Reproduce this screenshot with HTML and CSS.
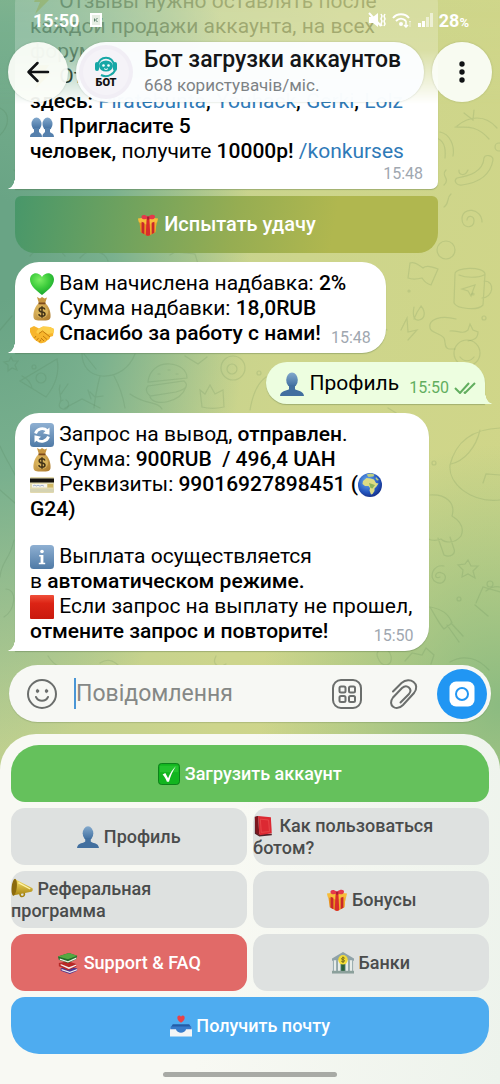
FILE: index.html
```html
<!DOCTYPE html>
<html lang="uk">
<head>
<meta charset="utf-8">
<meta name="viewport" content="width=device-width, initial-scale=1">
<title>Бот загрузки аккаунтов</title>
<link rel="stylesheet" href="styles.css">
</head>
<body>
<svg class="sprite" aria-hidden="true">
  <defs>
    <linearGradient id="blueSkin" x1="0" y1="0" x2="0" y2="1"><stop offset="0" stop-color="#83a9cd"/><stop offset="1" stop-color="#3b6a9c"/></linearGradient>
    <linearGradient id="tile" x1="0" y1="0" x2="0" y2="1"><stop offset="0" stop-color="#8fb0d2"/><stop offset="1" stop-color="#4f7aa6"/></linearGradient>
    <linearGradient id="redTile" x1="0" y1="0" x2="0" y2="1"><stop offset="0" stop-color="#f0503a"/><stop offset=".35" stop-color="#dc2415"/><stop offset="1" stop-color="#c9190d"/></linearGradient>
    <radialGradient id="heartFill" cx=".4" cy=".3" r=".8"><stop offset="0" stop-color="#7bee63"/><stop offset=".5" stop-color="#3bcb3b"/><stop offset="1" stop-color="#109a2c"/></radialGradient>
    <radialGradient id="sea" cx=".4" cy=".35" r=".65"><stop offset="0" stop-color="#6fb2ef"/><stop offset=".7" stop-color="#2457c0"/><stop offset="1" stop-color="#17348e"/></radialGradient>
    <linearGradient id="sack" x1="0" y1="0" x2="1" y2="1"><stop offset="0" stop-color="#e8c36b"/><stop offset="1" stop-color="#a9772a"/></linearGradient>
    <linearGradient id="goldHorn" x1="0" y1="0" x2="0" y2="1"><stop offset="0" stop-color="#f6e06a"/><stop offset="1" stop-color="#a9860f"/></linearGradient>
  </defs>
  <symbol id="bust" viewBox="0 0 24 24"><ellipse cx="12" cy="8" rx="5.800" ry="7.600" fill="url(#blueSkin)"/><path d="M9 13h6v4c1 2 8.500 1 9 7H0c.5-6 8-5 9-7z" fill="#426f9f"/></symbol>
  <symbol id="busts" viewBox="0 0 24 24"><ellipse cx="6.500" cy="9" rx="5" ry="6.500" fill="url(#blueSkin)"/><ellipse cx="17.500" cy="9" rx="5" ry="6.500" fill="url(#blueSkin)"/><path d="M4 13h5v4c1 1.300 3 1.500 3 5H0c0-4 3-3.500 4-5zM15 13h5v4c1 1.500 4 1 4 5H12.500c0-3.500 1.500-3.700 2.500-5z" fill="#5580ad"/></symbol>
  <symbol id="gift" viewBox="0 0 24 24"><path d="M2.500 8l9.500 3 9.500-3-1.500 12-8 4-8-4z" fill="#e8921e"/><path d="M12 10l9.500-2L20 20l-8 4z" fill="#f0ae2b"/><path d="M1 5l10-1.500L23 5l-1 4-10 3L2 9z" fill="#f7bd38"/><path d="M5 8.500l3 1V22l-3-1.500zM16 9.500l3-1V20.500L16 22z" fill="#c9282c"/><path d="M10.500 5h3l1 18.200-2.500.8-2.500-.8z" fill="#d92c2c"/><path d="M12 5C9 6 6 6.500 5 4c-1-3 3-4.500 7-1 4-3.500 8.500-2.500 7.500.8C18.500 6.500 15 6 12 5z" fill="#e5384a"/><path d="M11 2.800h2.400v3.400H11z" fill="#a91d30"/></symbol>
  <symbol id="heart" viewBox="0 0 24 24"><path d="M12 23C7 19 0 14 0 7.500 0 1 8-1.500 12 5c4-6.500 12-4 12 2.500C24 14 17 19 12 23z" fill="url(#heartFill)"/></symbol>
  <symbol id="moneybag" viewBox="0 0 24 24"><path d="M7 0l3 1.500L12 0l2.500 1.500L17 .5l-2 6H9z" fill="#c79640"/><path d="M9 6h6c4 3 6 9 5.500 14-.2 3-2.500 3.500-8.500 3.500S3.700 23 3.500 20C3 15 5 9 9 6z" fill="url(#sack)"/><path d="M8.500 5.500h7v1.800h-7z" fill="#7d4b1c"/><circle cx="12" cy="15" r="6" fill="#d8b35b"/><path d="M15 12.500c-.5-1.300-1.600-1.700-3-1.700-3.700 0-3.800 3.700 0 4.100 4 .4 3.900 4.300 0 4.300-1.600 0-2.900-.7-3.200-2.100M12 9.300v11.400" fill="none" stroke="#403117" stroke-width="1.500"/></symbol>
  <symbol id="handshake" viewBox="0 0 24 24"><path d="M0 6l4-2 5 2.500 4-2L20 5l4 2-1 7-3 1c0 3-3 3-3.500 4-1 2-3 1.500-4 2-2 1-4-.5-5-1.500C4 18 1.500 14 0 10z" fill="#f7b52c"/><path d="M4 4l5 2.500 4-2L20 5l4 2-.5 4-6 1-5-3-4 2.500C6 12 5.500 9 9 6.500" fill="#fdcf4b"/><path d="M9 11.500l3.500-2.500 7.500 6M6 14l-1.500 2M8.500 16l-2 2.500M11 17.500L9.500 20M13 14l4 3.500M11 16l3 3" fill="none" stroke="#c57c0d" stroke-width="1"/></symbol>
  <symbol id="refresh" viewBox="0 0 24 24"><rect width="24" height="24" rx="3.500" fill="url(#tile)"/><path d="M5.500 10.500C7 5.500 13.500 4 17 7.500M18.500 13.500C17 18.500 10.500 20 7 16.500" fill="none" stroke="#fff" stroke-width="2.800"/><path d="M19.500 4.500v7.200l-6.500-1.500zM4.500 19.500v-7.200l6.500 1.500z" fill="#fff"/></symbol>
  <symbol id="card" viewBox="0 0 24 24"><rect y="4" width="24" height="16" rx="1" fill="#e2d9ad"/><path d="M0 5.500h24v4H0z" fill="#15120f"/><path d="M2 11h15v3.500H2z" fill="#f7f5ec"/><path d="M3 13l2-1 1 1.200 2-1 2 1 2-1 2 1" fill="none" stroke="#8196c0" stroke-width=".7"/><path d="M0 16h24v3H0z" fill="#d5d3b2"/><path d="M17.500 11H23v3.500h-5.500z" fill="#d1b865"/></symbol>
  <symbol id="globe" viewBox="0 0 24 24"><circle cx="12" cy="12" r="12" fill="url(#sea)"/><path d="M5 8l3.500-3 4 .5 3.500 1 2 3.500 2.500.5-2 3-2 2v2.500L14.500 21l-1.500.5-1.500-4 .5-2.500-1.500-2H7l-2.500-2z" fill="#dddc83"/><path d="M11 10l3 1 3 1-2.500 3.500-2-.5z" fill="#8db35c"/><path d="M8.500 1.500l4-1 4 1-1 2-5 .5zM18 4l3 3-2 .5-1.500-2z" fill="#bccd83"/></symbol>
  <symbol id="info" viewBox="0 0 24 24"><rect width="24" height="24" rx="3.500" fill="url(#tile)"/><circle cx="12" cy="6.500" r="1.800" fill="#fff"/><path d="M9.200 10h4.200v7.800h1.800v1.500H8.800v-1.500h1.800v-6.200H9.200z" fill="#fff"/></symbol>
  <symbol id="square" viewBox="0 0 24 24"><rect width="24" height="24" rx="1" fill="url(#redTile)"/></symbol>
  <symbol id="check" viewBox="0 0 24 24"><rect x=".5" y=".5" width="23" height="23" rx="3.500" fill="#12b51f" stroke="#087b16"/><path d="M2 3h20v7H2z" fill="#39d43e" opacity=".45"/><path d="M5 12.500l3-1.500 3 5.500C13 11 16 7 19.500 3.500 16 9 13.500 14.500 12 20.500H9.700C8.500 17 7 14.500 5 12.500z" fill="#fff"/></symbol>
  <symbol id="book" viewBox="0 0 24 24"><path d="M2 2l3.500-1v20l15-.5v1.500L7 23.500l-5-3z" fill="#52232a"/><path d="M5.500 1l14 1.500L20.500 20 7 22z" fill="#dc2932"/><path d="M2 2.500L5.500 1 7 22l-4-2.500z" fill="#7d151d"/><path d="M8 4.500l9 1 1 12.500-9 1z" fill="none" stroke="#e8484a"/></symbol>
  <symbol id="megaphone" viewBox="0 0 24 24"><path d="M8 15l1.500 4.500c1 2.500 6 1.500 6-1.500L15 14l-2 .7.700 3.300c.2 1.500-2.200 2-2.700.5L10 14z" fill="#a4820f"/><path d="M4 1l19 10c1.500 1 .5 4-1 4L2 19z" fill="url(#goldHorn)"/><ellipse cx="3.500" cy="10" rx="2.800" ry="9.300" fill="#8b6a0d" transform="rotate(6 3.500 10)"/><path d="M8 5l13 7" stroke="#fff4a7" stroke-width="1.500"/></symbol>
  <symbol id="books" viewBox="0 0 24 24"><path d="M4 18l8-3 10 3v2.500L14 24 4 20.500z" fill="#51348c"/><path d="M5 18.500l9 3 8-3v1.500L14 23l-9-3z" fill="#eee"/><path d="M2 12l10-2 9 3v3l-9 4L2 15.500z" fill="#b72827"/><path d="M4 13l9 3.500 8-3v1.500l-8 3.500-9-4z" fill="#f5eeee"/><path d="M1 5l12-4 9 3-1 4-9 4L2 8.500z" fill="#246d2b"/><path d="M1 5l12-4 9 3-10 4z" fill="#54a941"/><path d="M3 7l9 3 9-4v1.500L12 11.500 3 8.500z" fill="#f0f2ea"/></symbol>
  <symbol id="bank" viewBox="0 0 24 24"><path d="M0 7L12 0l12 7v2.500H0z" fill="#8fa2a8"/><path d="M1 9h22v12H1z" fill="#8fa3a6"/><path d="M2 9h2.500v12H2zM6.500 9H9v12H6.500zM15 9h2.500v12H15zM19.500 9H22v12h-2.500z" fill="#e6ece9"/><path d="M10 13h4v8h-4z" fill="#285f3c"/><path d="M0 20.500h24v3H0z" fill="#8ba09b"/><circle cx="12" cy="8.500" r="5.200" fill="#f2dc38"/><path d="M14 7c-1-1.300-4-.8-3.500.8.300 1 3 .4 3.200 1.600.2 1.600-2.700 1.800-3.700.5M12 5v7" fill="none" stroke="#69621a"/></symbol>
  <symbol id="inbox" viewBox="0 0 24 24"><path d="M3 10h18l3 5H0z" fill="#235ca6"/><path d="M0 14h7c1 5 9 5 10 0h7v9.500H0z" fill="#f3f5f6"/><path d="M1 12.500h22l1 3h-6.500c-1 5-10 5-11 0H0z" fill="#377ccb"/><path d="M12 8.500C9 6.500 8 5 8 3c0-3 3-3 4-1.200C13 0 16 0 16 3c0 2-1 3.500-4 5.500z" fill="#ea4247"/></symbol>
  <symbol id="zap" viewBox="0 0 24 24"><path d="M9 0h10l-5 8h7L5 24l5-12H4z" fill="#f5c32b"/></symbol>
</svg>

<main class="screen">
  <svg class="doodles" viewBox="0 0 500 1084" preserveAspectRatio="xMidYMin slice" aria-hidden="true">
    <path d="M20 381l37-22c3 14-3 28-11 38z M22 376c6 3 9 7 10 12"/><circle cx="41" cy="378" r="5"/><circle cx="34" cy="367" r="2"/>
    <path d="M11 357l2 4 5 0-3 4 2 5-5-2-4 3 0-6-4-3 5-1z"/>
    <path d="M82 353c0 14 8 22 20 23 16 1 28-9 33-22M100 376c-3 12-5 22-6 32M114 376c5 9 9 20 11 32M90 392l5 5 8-1M88 390l3 9"/>
    <path d="M148 382c1-12 11-19 22-18 10 1 17 6 17 14zM148 386l36-5c6 5 0 9-8 11l-26 4c-5-4-4-8-2-10zM150 397c4 10 30 6 36-10M158 374h2M168 370h2M176 374h2"/>
    <path d="M200 390l5 4 5-9 5 9 8-4 1 17c-8 2-15 2-22 0z"/><circle cx="233" cy="368" r="12"/><circle cx="232" cy="369" r="5"/>
    <path d="M60 385c-3 8 3 10 0 18M68 384l-7 10M63 400c-5 2-5 8 0 9s8-6 3-9"/>
    <path d="M455 274c0-7 29-8 30 0l-2 31c-5 6-26 4-29-2zM484 281c12 0 9 17-2 17M462 289l13-4-4 11-3-5zM459 275c7 3 19 3 25 0"/>
    <path d="M410 263c5-2 10 3 13 5 3-3 10-1 15 1l-7 16c-4-1-7-4-9-7-4 1-9 2-14 0z"/>
    <path d="M456 319c-15-4-28 0-26 9 1 5 10 5 14 10 2 5 0 10 5 11h6M450 331c8-1 12 4 18-1l2-6 3 6 5 2c0 7-5 8-10 9"/>
    <path d="M414 307c-2 10 1 14 5 13 6-1 7-8 2-14-3 4-5 8-7 13M387 330l-10-8 1 11-9 2 10 6M401 330l6-12 1 14 9-2-9 10"/><circle cx="467" cy="353" r="13"/><path d="M460 357c4 5 10 5 14 0"/>
    <path d="M457 126c12-10 28-12 40 2M455 127c8 1 20-4 34 12M464 113l9 7 1-10M440 132c10 2 15 14 13 24M436 138c8 2 10 10 9 20M484 158c-1 14-15 18-27 20-4 3 0 8 5 7 15-2 28-8 31-25 0-5-8-6-9-2z"/>
    <path d="M468 170c-3 7-10 5-9 0M467 220c0-5 7-5 7 1 0 8-12 8-12-2 0-13 20-11 20 3M444 207c6-4 2-9 7-13M446 170c-6 6 5 8-2 15"/><circle cx="499" cy="147" r="4"/><circle cx="446" cy="250" r="9"/>
    <path d="M450 465c6-24 24-36 50-37M450 465c-2 18 20 38 50 35M480 430c-4 18-16 31-29 34M483 483l3-9 14 1M430 495c16-1 26 8 22 21 8 5 13 11 9 20-7 9-17 6-20 3-7 3-14 1-17-4M438 538l6 17c6 3 12-1 10-6l-4-12"/>
    <path d="M468 560l3 6 7 0-5 5 2 7-7-4-6 3 1-7-5-5 7-1zM440 577c-7 3-5-7 2-4 7 2 2 14-6 9-8-4-3-18 8-16M476 603l7-16 17 5M475 605l13 11M486 591c5-4 10-5 14-4M430 607c12 2 19 7 22 16l-8 6c-5-5-8-12-14-22M447 625l12 17M451 623l12 13"/>
    <path d="M0 446c7 17 17 28 22 46M0 490l15 13 6-8M14 540c-4 20-13 21-14 37M6 589c12 1 9 21-2 28M0 330l12-14M0 108c10 5 10 17 0 27M14 170c10 10 28 14 48 10M84 354l12 15"/>
    <path d="M30 256c10-12 28-10 35 0M80 258c10-12 25-6 28 3M170 255l5-3 20 2 3 10M65 408l17-9 18 9M130 394c15 11 28 7 32 15"/>
    <path d="M48 656c10 16 18 8 26 16M100 663c9-6 15-1 20 4M216 656c-5 10 4 12 10 8M378 658c-5-10 11-13 13-2s-9 12-13 2M405 661l7-8 10 2 4-7 8 7-3 9M450 662c14-8 28-4 39 8M464 671c11-6 17 0 22 9"/>
    <path d="M185 356l13 8 9-7M370 364c16 7 28 3 40 13M388 408l13 8M440 390c10-9 28-11 39 2M250 410c2-12 6-26 16-33"/>
    <circle cx="473" cy="294" r="1"/><circle cx="434" cy="463" r="2"/><circle cx="459" cy="599" r="2"/><circle cx="484" cy="318" r="2"/><circle cx="490" cy="584" r="3"/><circle cx="409" cy="291" r="1"/><circle cx="259" cy="373" r="2"/>
  </svg>

  <section class="chat" aria-label="Чат">
    <article class="bubble bubble--long">
      <p><svg class="emoji"><use href="#zap"/></svg> Отзывы нужно оставлять после<br>каждой продажи аккаунта, на всех<br>форумах!<br><svg class="emoji"><use href="#zap"/></svg> От<br><b>здесь:</b> <a href="#piratebunta">Piratebunta</a><b>,</b> <a href="#youhack">Youhack</a><b>,</b> <a href="#gerki">Gerki</a><b>,</b> <a href="#lolz">Lolz</a><br><svg class="emoji"><use href="#busts"/></svg> <b>Пригласите 5<br>человек,</b> получите <b>10000р!</b> <a href="#konkurses">/konkurses</a></p>
      <time class="stamp stamp--row">15:48</time>
    </article>
    <button class="inline-key" type="button"><svg class="emoji"><use href="#gift"/></svg> Испытать удачу</button>

    <article class="bubble">
      <p><svg class="emoji"><use href="#heart"/></svg> Вам начислена надбавка: <b>2%</b><br><svg class="emoji"><use href="#moneybag"/></svg> Сумма надбавки: <b>18,0RUB</b></p>
      <p class="last-line"><span><svg class="emoji"><use href="#handshake"/></svg> <b>Спасибо за работу с нами!</b></span><time class="stamp">15:48</time></p>
    </article>

    <article class="bubble bubble--out">
      <p class="last-line"><span><svg class="emoji"><use href="#bust"/></svg> Профиль</span><span class="stamp"><time>15:50</time><svg class="ticks" viewBox="0 0 22 12"><path d="M1 6l5 5L15 1M10 10l1 1L21 1"/></svg></span></p>
    </article>

    <article class="bubble bubble--request">
      <p><svg class="emoji"><use href="#refresh"/></svg> Запрос на вывод, <b>отправлен</b>.<br><svg class="emoji"><use href="#moneybag"/></svg> Сумма: <b>900RUB &nbsp;/ 496,4 UAH</b><br><svg class="emoji"><use href="#card"/></svg> Реквизиты: <b>99016927898451 (</b><svg class="emoji"><use href="#globe"/></svg><br><b>G24)</b></p>
      <p class="note"><svg class="emoji"><use href="#info"/></svg> Выплата осуществляется<br>в <b>автоматическом режиме.</b><br><svg class="emoji"><use href="#square"/></svg> Если запрос на выплату не прошел,</p>
      <p class="last-line"><b>отмените запрос и повторите!</b><time class="stamp">15:50</time></p>
    </article>
  </section>

  <div class="veil"></div>

  <header class="top">
    <div class="status">
      <span class="clock">15:50</span>
      <svg class="sim" viewBox="0 0 12 14"><rect x="1" y="1" width="10" height="12" fill="none" stroke="#fff" stroke-width="2"/><path d="M2 2h8v10H2z" fill="#e6eee3"/><path d="M4.500 5.500v3M7.500 5L5.500 7l2 2" stroke="#59816a" fill="none"/></svg>
      <svg class="mute" viewBox="0 0 18 16"><path d="M1 5h4l5-4v14l-5-4H1z" fill="#fff"/><path d="M1 1l12 13" stroke="#fff" stroke-width="2"/><path d="M13 2l1 2-1 3 1 2-1 3 1 2M17 2l-1 2 1 3-1 2 1 3-1 2" fill="none" stroke="#fff" stroke-width="1.500"/></svg>
      <svg class="wifi" viewBox="0 0 20 16"><path d="M1 6c4-5 12-5 16 0M4 9c3-3 7-3 10 0" fill="none" stroke="#fff" stroke-width="2"/><circle cx="9" cy="12" r="2" fill="#fff"/><path d="M14 9v6m-2-2l2 2 2-2" fill="none" stroke="#fff" stroke-width="1.500"/><path d="M18 15V9m-1 1l1-1 1 1" fill="none" stroke="#fff" opacity=".5"/></svg>
      <svg class="signal" viewBox="0 0 15 14"><path d="M0 10h3v4H0zM4 8h3v6H4z" fill="#fff"/><path d="M8 4h3v10H8zM12 0h3v14h-3z" fill="#fff" opacity=".55"/></svg>
      <span class="battery">28<small>%</small></span>
    </div>
    <nav class="nav">
      <button class="round" type="button" aria-label="Назад"><svg viewBox="0 0 24 24" width="24" height="24"><path d="M22 12H3M11.500 3L2.500 12l9 9" fill="none" stroke="#101214" stroke-width="2.500" stroke-linecap="round" stroke-linejoin="round"/></svg></button>
      <div class="peer">
        <svg class="avatar" viewBox="0 0 54 54"><circle cx="27" cy="27" r="27" fill="#f1eef5"/><circle cx="27" cy="27" r="23" fill="#f5f3f8"/><path d="M19 21c0-11 16-11 16 0" fill="none" stroke="#17a7a6" stroke-width="2"/><rect x="16" y="17" width="4" height="9" rx="2" fill="#17a7a6"/><rect x="34" y="17" width="4" height="9" rx="2" fill="#17a7a6"/><ellipse cx="27" cy="21" rx="7" ry="5.500" fill="#17a7a6"/><path d="M22 30c3 1.500 7 1.500 10-.5 2-1 3-2 4-4" fill="none" stroke="#17a7a6" stroke-width="2"/><circle cx="24.500" cy="20.500" r="1.300" fill="#fff"/><circle cx="29.500" cy="20.500" r="1.300" fill="#fff"/><path d="M25 23.500c1 1.200 3 1.200 4 0" fill="none" stroke="#fff"/><text class="avatar-text" x="27" y="41" text-anchor="middle">БОТ</text></svg>
        <div class="peer-text">
          <h1>Бот загрузки аккаунтов</h1>
          <p>668 користувачів/міс.</p>
        </div>
      </div>
      <button class="round" type="button" aria-label="Меню"><svg viewBox="0 0 24 24" width="24" height="24" fill="#101214"><circle cx="12" cy="4" r="2.700"/><circle cx="12" cy="12" r="2.700"/><circle cx="12" cy="20" r="2.700"/></svg></button>
    </nav>
  </header>

  <form class="composer">
    <button class="tool" type="button" aria-label="Емодзі"><svg viewBox="0 0 32 32"><circle cx="16" cy="16" r="14"/><path d="M10 19c2.500 5 9.500 5 12 0"/><ellipse cx="11.500" cy="13" rx="1.200" ry="1.600" class="dot"/><ellipse cx="20.500" cy="13" rx="1.200" ry="1.600" class="dot"/></svg></button>
    <input class="message" type="text" placeholder="Повідомлення" aria-label="Повідомлення">
    <button class="tool" type="button" aria-label="Команди бота"><svg viewBox="0 0 32 32"><rect x="2" y="2" width="28" height="28" rx="8"/><rect x="8.500" y="8.500" width="6" height="6" rx="1.500"/><rect x="18" y="8.500" width="6" height="6" rx="1.500"/><rect x="8.500" y="18" width="6" height="6" rx="1.500"/><rect x="18" y="18" width="6" height="6" rx="1.500"/></svg></button>
    <button class="tool tool--clip" type="button" aria-label="Вкласти файл"><svg viewBox="0 0 32 32"><path d="M5 13.500L13.500 5C22-2 33 6 26 15L15 27C8 34-1 27 5 19.500l9-9.500c5-4.500 11 1 7 6l-8.500 8.500"/></svg></button>
    <button class="camera" type="button" aria-label="Записати відео"><svg viewBox="0 0 26 26"><rect x=".5" y=".5" width="25" height="25" rx="6.500" fill="#fff"/><circle cx="13" cy="13" r="6" fill="none" stroke="#2196f3" stroke-width="2"/></svg></button>
  </form>

  <section class="keyboard" aria-label="Клавіатура бота">
    <button class="key key--green key--wide" type="button"><span><svg class="emoji"><use href="#check"/></svg> Загрузить аккаунт</span></button>
    <button class="key" type="button"><span><svg class="emoji"><use href="#bust"/></svg> Профиль</span></button>
    <button class="key key--start" type="button"><span><svg class="emoji"><use href="#book"/></svg> Как пользоваться<br>ботом?</span></button>
    <button class="key key--start" type="button"><span><svg class="emoji"><use href="#megaphone"/></svg> Реферальная<br>программа</span></button>
    <button class="key" type="button"><span><svg class="emoji"><use href="#gift"/></svg> Бонусы</span></button>
    <button class="key key--red" type="button"><span><svg class="emoji"><use href="#books"/></svg> Support &amp; FAQ</span></button>
    <button class="key" type="button"><span><svg class="emoji"><use href="#bank"/></svg> Банки</span></button>
    <button class="key key--blue key--wide" type="button"><span><svg class="emoji"><use href="#inbox"/></svg> Получить почту</span></button>
    <div class="home-bar"></div>
  </section>
</main>
</body>
</html>
```
FILE: styles.css
```css
:root {
  --wallpaper:
    radial-gradient(ellipse 240px 260px at 100% 65%, rgba(132, 184, 128, 0.9), rgba(132, 184, 128, 0)),
    radial-gradient(ellipse 250px 500px at 0 23%, #69a485 10%, rgba(112, 172, 142, 0.88) 45%, rgba(140, 188, 146, 0)),
    linear-gradient(100deg, #b5cc90 0%, #cdd58c 50%, #d1d687 100%);
}

* {
  box-sizing: border-box;
}

body {
  margin: 0;
  font-family: Roboto, "Noto Sans", sans-serif;
  color: #000;
}

button,
input {
  font: inherit;
  color: inherit;
  border: 0;
  padding: 0;
  margin: 0;
  background: none;
}

p,
h1 {
  margin: 0;
}

b {
  font-weight: 500;
}

a {
  color: #2f7ab8;
  text-decoration: none;
}

.sprite {
  position: absolute;
  width: 0;
  height: 0;
}

.screen {
  position: relative;
  display: flex;
  flex-direction: column;
  height: 100vh;
  overflow: hidden;
  background: var(--wallpaper);
}

.doodles {
  position: absolute;
  inset: 0;
  width: 100%;
  height: 100%;
  fill: none;
  stroke: rgba(70, 115, 70, 0.14);
  stroke-width: 1.2;
  stroke-linecap: round;
}

.emoji {
  width: 24px;
  height: 24px;
  vertical-align: -6px;
}

/* Messages */
.chat {
  position: relative;
  flex: 1 1 0;
  min-height: 0;
  display: flex;
  flex-direction: column;
  justify-content: flex-end;
  align-items: flex-start;
  gap: 9px;
  padding: 0 15px 14px;
  overflow: hidden;
  font-size: 21px;
  line-height: 25px;
}

.chat > * {
  flex-shrink: 0;
}

.bubble {
  position: relative;
  padding: 9px 15px 7px;
  background: #fff;
  border-radius: 24px 24px 24px 0;
  box-shadow: 0 1px 1px rgba(60, 90, 50, 0.3);
  white-space: nowrap;
}

.bubble::before {
  content: "";
  position: absolute;
  right: 100%;
  bottom: 0;
  width: 8px;
  height: 12px;
  background: radial-gradient(8px 12px at 0 0, transparent 96%, #fff 100%);
}

.bubble--long {
  width: 90%;
  border-radius: 24px 24px 7px 0;
}

.bubble--request {
  width: 88%;
}

.bubble--out {
  align-self: flex-end;
  padding: 9px 9px 8px 14px;
  background: #edfee0;
  border-radius: 21px 21px 0 21px;
}

.bubble--out::before {
  right: auto;
  left: 100%;
  background: radial-gradient(8px 12px at 100% 0, transparent 96%, #edfee0 100%);
}

.last-line {
  display: flex;
  justify-content: space-between;
  gap: 10px;
}

.stamp {
  display: flex;
  align-items: center;
  gap: 5px;
  align-self: flex-end;
  font-size: 16px;
  line-height: 16px;
  color: #a0a7b0;
}

.stamp--row {
  justify-content: flex-end;
  padding-top: 2px;
}

.bubble--out .stamp {
  color: #62ae5f;
}

.ticks {
  width: 22px;
  height: 12px;
  fill: none;
  stroke: #62ae5f;
  stroke-width: 2;
}

.note {
  margin-top: 22px;
}

.inline-key {
  width: 90%;
  height: 57px;
  margin-top: -2px;
  border-radius: 6px 6px 20px 20px;
  background: linear-gradient(100deg, #48976a 0%, #96ad52 52%, #b0b74f 75%);
  color: #fff;
  font-size: 20px;
  font-weight: 500;
}

/* Top bar */
.veil {
  position: absolute;
  inset: 0;
  background: var(--wallpaper);
  pointer-events: none;
  -webkit-mask-image: linear-gradient(rgba(0, 0, 0, 0.82) 0, rgba(0, 0, 0, 0.78) 50px, transparent 104px);
  mask-image: linear-gradient(rgba(0, 0, 0, 0.82) 0, rgba(0, 0, 0, 0.78) 50px, transparent 104px);
}

.top {
  position: absolute;
  top: 0;
  left: 0;
  right: 0;
}

.status {
  display: flex;
  align-items: center;
  gap: 6px;
  height: 42px;
  padding: 0 31px 2px 33px;
  color: #fff;
  font-size: 18px;
  font-weight: 700;
}

.sim {
  width: 12px;
  height: 14px;
  margin-left: 5px;
}

.mute {
  width: 18px;
  height: 16px;
  margin-left: auto;
}

.wifi {
  width: 20px;
  height: 16px;
}

.signal {
  width: 15px;
  height: 14px;
}

.battery small {
  font-size: 13px;
}

.nav {
  display: flex;
  gap: 8px;
  padding: 0 8px;
}

.round {
  display: grid;
  place-items: center;
  flex: none;
  width: 60px;
  height: 60px;
  border-radius: 50%;
  background: rgba(251, 253, 248, 0.94);
  box-shadow: 0 0 2px rgba(60, 80, 60, 0.25);
}

.peer {
  flex: 1;
  display: flex;
  align-items: center;
  gap: 11px;
  height: 60px;
  padding-left: 3px;
  border-radius: 30px;
  background: rgba(251, 253, 254, 0.98);
  box-shadow: 0 0 2px rgba(60, 80, 60, 0.25);
  white-space: nowrap;
}

.avatar {
  width: 54px;
  height: 54px;
}

.avatar-text {
  font: 900 11px Roboto, sans-serif;
  fill: #111;
}

.peer h1 {
  font-size: 23px;
  line-height: 26px;
  font-weight: 500;
  color: #141618;
}

.peer p {
  font-size: 17px;
  line-height: 24px;
  color: #7d8285;
}

/* Message field */
.composer {
  position: relative;
  display: flex;
  align-items: center;
  gap: 25px;
  height: 57px;
  margin: 0 9px 12px;
  padding: 0 4px 0 17px;
  border-radius: 29px;
  background: #f7f8f4;
  box-shadow: 0 1px 1px rgba(60, 90, 50, 0.2);
}

.tool {
  flex: none;
  width: 32px;
  height: 32px;
}

.tool svg {
  display: block;
  width: 32px;
  height: 32px;
  fill: none;
  stroke: #6b6e6c;
  stroke-width: 2;
  stroke-linecap: round;
}

.tool .dot {
  fill: #6b6e6c;
  stroke-width: 1;
}

.tool--clip {
  margin-right: -8px;
}

.message {
  flex: 1;
  min-width: 0;
  height: 31px;
  margin-left: -9px;
  border-left: 2px solid #4a96d6;
  font-size: 23px;
  outline: 0;
}

.message::placeholder {
  color: #858886;
  opacity: 1;
}

.camera {
  display: grid;
  place-items: center;
  flex: none;
  width: 50px;
  height: 50px;
  border-radius: 50%;
  background: #2196f3;
}

.camera svg {
  width: 26px;
  height: 26px;
}

/* Reply keyboard */
.keyboard {
  position: relative;
  display: grid;
  grid-template-columns: 1fr 1fr;
  gap: 6px;
  padding: 11px 11px 7px;
  border-radius: 36px 36px 0 0;
  background: linear-gradient(100deg, #f8f9f3 45%, #edf3ec);
}

.key {
  min-height: 57px;
  border-radius: 14px;
  background: #dee1e0;
  color: #4a4c4c;
  font-size: 18px;
  line-height: 22px;
  font-weight: 500;
}

.key .emoji,
.inline-key .emoji {
  width: 22px;
  height: 22px;
  vertical-align: -5px;
}

.key--wide {
  grid-column: 1 / -1;
}

.key--start {
  text-align: left;
}

.key--green {
  border-radius: 28px 28px 14px 14px;
  background: #65c15c;
  color: #fff;
}

.key--red {
  background: #e16a68;
  color: #fff;
}

.key--blue {
  border-radius: 14px 14px 28px 28px;
  background: #4eacf0;
  color: #fff;
}

.home-bar {
  grid-column: 1 / -1;
  justify-self: center;
  width: 174px;
  height: 5px;
  margin-top: 12px;
  border-radius: 3px;
  background: #a8aaa5;
}
```
